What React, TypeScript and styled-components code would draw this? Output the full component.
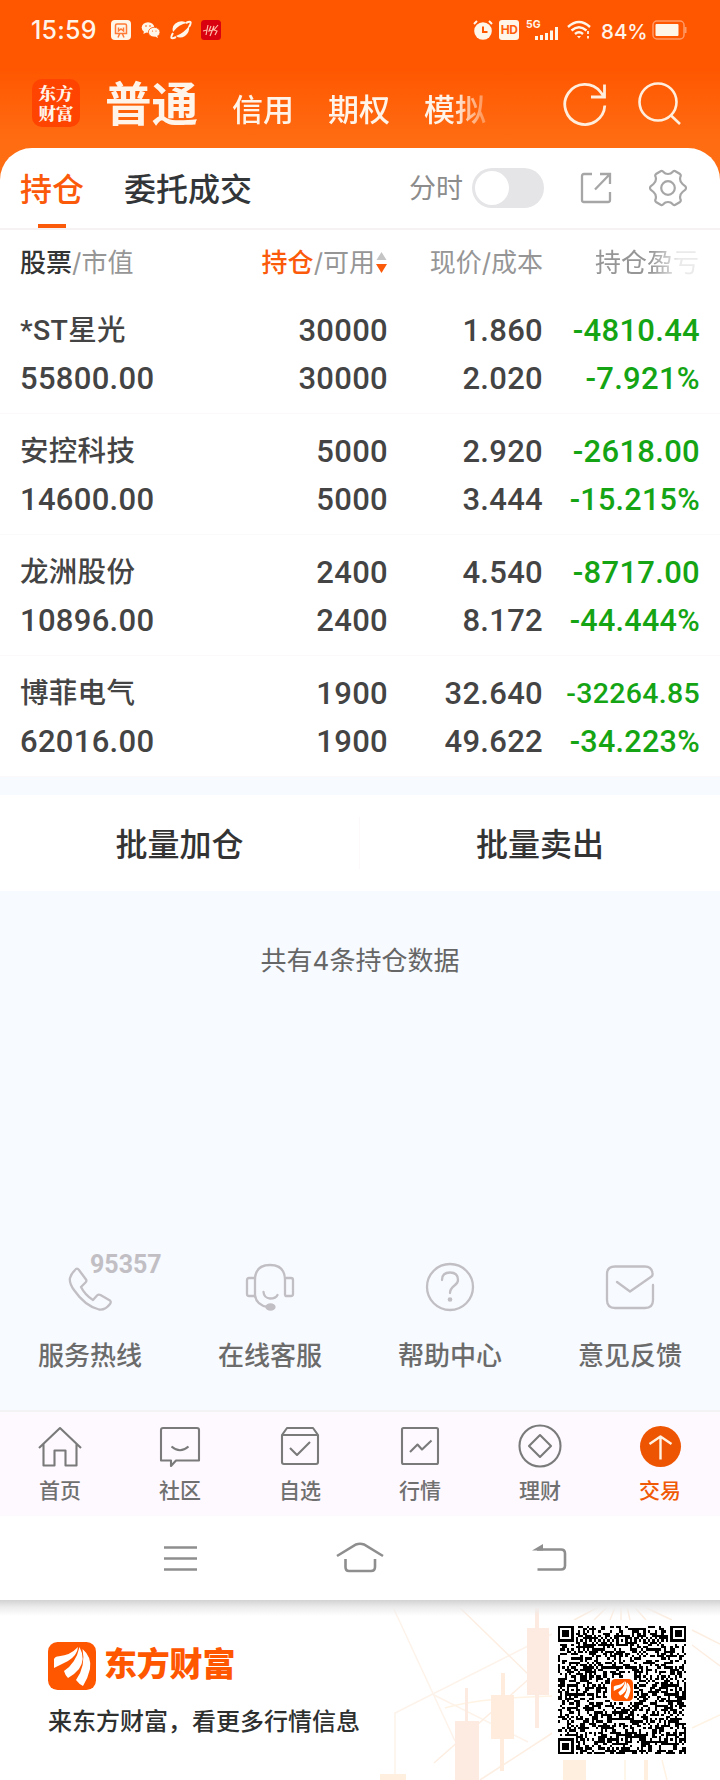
import React from "react";
import styled, { createGlobalStyle, css } from "styled-components";

const GlobalStyle = createGlobalStyle`
  * { box-sizing: border-box; }
  body {
    margin: 0;
    background: #fff;
    font-family: Inter, "Noto Sans CJK SC", sans-serif;
    color: #3a3a3a;
  }
`;

const Page = styled.div`
  width: 720px;
  height: 1780px;
  overflow: hidden;
  display: flex;
  flex-direction: column;
  background: #f7faff;
`;

const TopArea = styled.header`
  height: 184px;
  flex: none;
  background: linear-gradient(#ff5600 0, #ff5600 66px, #ff6c12 140px, #ff6f14 184px);
  color: #fff4ea;
`;

const StatusBar = styled.div`
  height: 60px;
  padding: 0 33px 0 31px;
  display: flex;
  align-items: center;
  justify-content: space-between;
`;

const StatusGroup = styled.div`
  display: flex;
  align-items: center;
`;

const Clock = styled.span`
  width: 80px;
  font-size: 25px;
  font-weight: 500;
  line-height: 30px;
  letter-spacing: 0.2px;
`;

const Battery = styled.span`
  width: 51px;
  padding-top: 4px;
  font-size: 20.5px;
  font-weight: 500;
  line-height: 26px;
`;

const MarketBar = styled.div`
  height: 88px;
  padding: 0 38px 0 32px;
  display: flex;
  align-items: flex-start;
`;

const BrandTile = styled.div`
  width: 48px;
  height: 48px;
  margin-top: 19px;
  padding-top: 4px;
  border-radius: 10px;
  background: #ff4300;
  font-family: "Noto Serif CJK SC", "Noto Sans CJK SC", sans-serif;
  font-size: 17.5px;
  font-weight: 900;
  line-height: 20px;
  display: flex;
  flex-direction: column;
  align-items: center;
`;

const Markets = styled.nav`
  width: 392px;
  margin-left: 25px;
  height: 88px;
  display: flex;
  align-items: baseline;
  white-space: nowrap;
  mask-image: linear-gradient(90deg, #000 348px, rgba(0, 0, 0, 0.25) 384px);
`;

const Market = styled.span<{ $main?: boolean }>`
  font-size: ${(p) => (p.$main ? "46.5px" : "31px")};
  font-weight: ${(p) => (p.$main ? 600 : 500)};
  line-height: 88px;
  margin-right: 34px;
`;

const MarketActions = styled.div`
  margin-left: auto;
  margin-top: 20px;
  display: flex;
  gap: 31px;
`;

const Sheet = styled.section`
  flex: none;
  height: 628px;
  margin-top: -36px;
  border-radius: 32px 32px 0 0;
  background: #fff;
`;

const TabsRow = styled.div`
  height: 82px;
  padding: 0 33px 0 20px;
  border-bottom: 2px solid #f6f2f4;
  display: flex;
  align-items: center;
`;

const Tab = styled.span<{ $active?: boolean }>`
  height: 80px;
  font-size: 32px;
  font-weight: 500;
  line-height: 84px;
  margin-right: 40px;
  color: ${(p) => (p.$active ? "#fa5a0a" : "#333638")};
  display: flex;
  flex-direction: column;
  align-items: center;
  &::after {
    content: "";
    flex: none;
    display: ${(p) => (p.$active ? "block" : "none")};
    width: 28px;
    height: 4px;
    margin-top: -8px;
    background: #fa5a0a;
  }
`;

const SwitchLabel = styled.span`
  margin-left: auto;
  padding-top: 2px;
  font-size: 27px;
  line-height: 40px;
  color: #8c8c8c;
`;

const Switch = styled.span`
  width: 72px;
  height: 40px;
  margin: 0 36px 0 9px;
  padding: 3px;
  border-radius: 20px;
  background: #e5e5e7;
  &::before {
    content: "";
    display: block;
    width: 34px;
    height: 34px;
    border-radius: 50%;
    background: #fff;
  }
`;

const columns = css`
  display: grid;
  grid-template-columns: 200px 168px 155px 157px;
  padding: 0 20px;
`;

const HeadRow = styled.div`
  ${columns}
  height: 63px;
  padding-top: 14px;
  align-items: start;
  font-size: 26px;
  line-height: 38px;
  color: #969696;
  white-space: nowrap;
`;

const HeadCell = styled.span<{ $right?: boolean }>`
  display: flex;
  align-items: center;
  justify-content: ${(p) => (p.$right ? "flex-end" : "flex-start")};
`;

const FadedHead = styled.span`
  margin-left: 52px;
  width: 105px;
  mask-image: linear-gradient(90deg, #000 56px, rgba(0, 0, 0, 0.2) 84px);
`;

const Strong = styled.b<{ $accent?: boolean }>`
  font-weight: 500;
  color: ${(p) => (p.$accent ? "#fa5a0a" : "#333")};
`;

const Holding = styled.div`
  ${columns}
  height: 121px;
  padding-top: 14px;
  border-bottom: 1px solid #fbf9fa;
  font-family: Roboto, "Noto Sans CJK SC", sans-serif;
  font-size: 31px;
  font-weight: 500;
  line-height: 48px;
  letter-spacing: 0.3px;
  color: #444;
`;

const Pair = styled.div<{ $right?: boolean; $loss?: boolean }>`
  display: flex;
  flex-direction: column;
  white-space: nowrap;
  align-items: ${(p) => (p.$right ? "flex-end" : "flex-start")};
  ${(p) => p.$loss && "color: #14a414;"}
`;

const Value = styled.span<{ $size?: number }>`
  ${(p) => p.$size && `font-size: ${p.$size}px;`}
`;

const Actions = styled.div`
  flex: none;
  height: 96px;
  margin-top: 19px;
  background: #fff;
  display: grid;
  grid-template-columns: 359px 1fr;
  align-items: center;
`;

const Action = styled.button`
  height: 52px;
  border: 0;
  padding: 4px 0 0;
  background: none;
  font: 500 32px/48px Inter, "Noto Sans CJK SC", sans-serif;
  color: #333;
  & + & { border-left: 1px solid #fdf9fb; }
`;

const Summary = styled.p`
  flex: none;
  margin: 51px 0 0;
  height: 38px;
  text-align: center;
  font-size: 26px;
  line-height: 38px;
  color: #666;
`;

const HelpRow = styled.div`
  flex: none;
  margin-top: 265px;
  height: 165px;
  display: grid;
  grid-template-columns: repeat(4, 1fr);
`;

const HelpItem = styled.div`
  display: flex;
  flex-direction: column;
  align-items: center;
  font-size: 26px;
  font-weight: 500;
  line-height: 38px;
  color: #6b6b6b;
`;

const HelpIcon = styled.div`
  position: relative;
  height: 92px;
  padding-top: 17px;
`;

const Hotline = styled.span`
  position: absolute;
  left: 25px;
  top: 5px;
  font-family: Roboto, sans-serif;
  font-size: 25px;
  font-weight: 700;
  line-height: 30px;
  color: #c2bfc4;
`;

const TabBar = styled.nav`
  flex: none;
  height: 106px;
  border-top: 2px solid #f3f3f6;
  background: #fdf9ff;
  display: grid;
  grid-template-columns: repeat(6, 1fr);
`;

const TabItem = styled.div<{ $active?: boolean }>`
  display: flex;
  flex-direction: column;
  align-items: center;
  padding-top: 11px;
  font-size: 21px;
  font-weight: 500;
  line-height: 30px;
  gap: 7px;
  color: ${(p) => (p.$active ? "#f05a06" : "#707070")};
`;

const SystemNav = styled.div`
  flex: none;
  height: 84px;
  padding: 0 0 1px 156px;
  background: #fff;
  display: flex;
  align-items: center;
`;

const Promo = styled.footer`
  position: relative;
  flex: none;
  height: 180px;
  padding: 0 34px 0 48px;
  background: #fff;
  display: flex;
  justify-content: space-between;
`;

const PromoArt = styled.svg`
  position: absolute;
  right: 0;
  top: 0;
`;

const PromoShade = styled.div`
  position: absolute;
  inset: 0 0 auto 0;
  height: 16px;
  background: linear-gradient(#d2d2d2, #ececec 45%, rgba(255, 255, 255, 0));
`;

const PromoText = styled.div`
  padding-top: 42px;
`;

const Brand = styled.div`
  display: flex;
  align-items: center;
  gap: 8px;
  height: 48px;
  font-size: 33px;
  font-weight: 900;
  line-height: 44px;
  letter-spacing: -0.2px;
  color: #ff5600;
`;

const BrandName = styled.span`
  padding-bottom: 4px;
`;

const Slogan = styled.div`
  margin-top: 14px;
  font-size: 24px;
  font-weight: 500;
  line-height: 36px;
  color: #2e3030;
`;

const CodeBox = styled.div`
  position: relative;
  width: 140px;
  height: 140px;
  margin: 20px -6px 0 0;
  padding: 6px;
  background: #fff;
`;

const TrainIcon = () => (
  <svg width="20" height="20" viewBox="0 0 20 20">
    <rect width="20" height="20" rx="4" fill="#fff6ea" />
    <path d="M4.500 13.500V5.500Q4.500 4 6 4H14Q15.500 4 15.500 5.500V13.500zM7 17.500L8.500 14M13 17.500L11.500 14M7.500 7.500V11L10 9L12.500 11V7.500" fill="none" stroke="#ff7a35" strokeWidth="1.500" />
  </svg>
);

const ChatIcon = () => (
  <svg width="20" height="18" viewBox="0 0 20 18" fill="#fff6ea">
    <ellipse cx="7" cy="6.500" rx="6.300" ry="5.300" />
    <path d="M3 10l-.6 3 3-1.500z" />
    <ellipse cx="13.200" cy="11.200" rx="5.800" ry="4.900" stroke="#ff5600" strokeWidth=".8" />
    <path d="M16 14.500l1 2.500-3-1.500z" />
    <g fill="#ff5600"><circle cx="5" cy="5" r=".8" /><circle cx="9" cy="5" r=".8" /><circle cx="11.500" cy="10" r=".6" /><circle cx="15" cy="10" r=".6" /></g>
  </svg>
);

const PlanetIcon = () => (
  <svg width="22" height="20" viewBox="0 0 22 20" fill="none">
    <path d="M3 12Q1 5 8 2Q13 0 17 3Q9 4 3 12zM6 16Q14 13 19 6Q20 12 15 16Q10 19 6 16z" fill="#fff6ea" />
    <path d="M3 13C0 18 1 19.500 6 17M16 3c5-2.500 6-1 3 4" stroke="#fff6ea" strokeWidth="2" />
    <path d="M5 14Q8 7 16 4.500Q13 11 5 14z" fill="#ff5600" />
  </svg>
);

const RedIcon = () => (
  <svg width="20" height="20" viewBox="0 0 20 20">
    <rect width="20" height="20" rx="3.500" fill="#d9000f" />
    <path d="M2 11l4-1M7 5L5 15M10 6l-2 5 4-1 1-4-4 10M17 5l-4 5 3 1-2 4" fill="none" stroke="#ffb9a8" strokeWidth="1.200" />
  </svg>
);

const AlarmIcon = () => (
  <svg width="20" height="20" viewBox="0 0 20 20">
    <circle cx="10" cy="11" r="8.800" fill="#fff6ea" />
    <path d="M1 4l3-3M19 4l-3-3" stroke="#fff6ea" strokeWidth="2" />
    <path d="M10 6.500V12h4.500" fill="none" stroke="#ff5600" strokeWidth="2" />
  </svg>
);

const HdTile = styled.span`
  width: 20px;
  height: 20px;
  margin-left: 6px;
  border-radius: 3px;
  background: #fff6ea;
  color: #ff5f0c;
  font-size: 12px;
  font-weight: 700;
  line-height: 20px;
  text-align: center;
  letter-spacing: -0.5px;
`;

const Signal = styled.span`
  position: relative;
  width: 34px;
  height: 22px;
  margin-left: 7px;
  font-size: 10.5px;
  font-weight: 700;
  line-height: 11px;
  color: #fff6ea;
  svg { position: absolute; left: 8px; bottom: 1px; }
`;

const WifiIcon = () => (
  <svg width="24" height="20" viewBox="0 0 24 20" fill="none" stroke="#fff6ea" strokeWidth="2.400">
    <path d="M1 7Q12-3 23 7M4.500 10.500Q12 4 19.500 10.500M8 14Q12 10.500 16 14" />
    <path d="M10 16l2 2.500 2-2.500z" fill="#fff6ea" stroke="none" />
    <path d="M21 11v3M21 16v2.500" strokeWidth="1.800" />
  </svg>
);

const BatteryIcon = () => (
  <svg width="35" height="20" viewBox="0 0 35 20" fill="none">
    <rect x="1" y="1" width="31" height="18" rx="4" stroke="#ff9a66" strokeWidth="1.500" />
    <rect x="3.500" y="4" width="23" height="12" rx="1" fill="#fff6ea" />
    <path d="M33.500 7v6" stroke="#ff9a66" strokeWidth="2" />
  </svg>
);

const RefreshIcon = () => (
  <svg width="44" height="46" viewBox="0 0 44 46" fill="none" stroke="#ffeedd" strokeWidth="2.800">
    <path d="M41.800 25.500A20 20 0 1 1 37.500 12L41 16.500M41.500 4.500V17H28" />
  </svg>
);

const SearchIcon = () => (
  <svg width="44" height="46" viewBox="0 0 44 46" fill="none" stroke="#ffeedd" strokeWidth="2.600">
    <circle cx="20" cy="22" r="18.500" />
    <path d="M33 35.500l9 8.500" />
  </svg>
);

const ShareIcon = () => (
  <svg width="32" height="32" viewBox="0 0 32 32" fill="none" stroke="#a6a6a6" strokeWidth="2.300">
    <path d="M12 2H4Q2 2 2 4V28Q2 30 4 30H28Q30 30 30 28V20M20 2H30V12M30 2L15 17.500" />
  </svg>
);

const GearIcon = () => (
  <svg width="38" height="38" viewBox="0 0 38 38" fill="none" stroke="#a6a6a6" strokeWidth="2.200">
    <path d="M12 2Q13.500 1.500 14.500 3Q16 5 19 5T23.500 3Q24.500 1.500 26 2L31 5Q32.200 6 31.500 7.500Q30 12 33.500 15L36.500 17.500Q37.500 19 36.500 20.500L33.500 23Q30 26 31.500 30.500Q32.200 32 31 33L26 36Q24.500 36.500 23.500 35Q22 33 19 33T14.500 35Q13.500 36.500 12 36L7 33Q5.800 32 6.500 30.500Q8 26 4.500 23L1.500 20.500Q.5 19 1.500 17.500L4.500 15Q8 12 6.500 7.500Q5.800 6 7 5z" />
    <circle cx="19" cy="19" r="6.800" />
  </svg>
);

const GearSlot = styled.span`
  display: flex;
  margin-left: 37px;
`;

const ShareSlot = styled.span`
  display: flex;
`;

const SortIcon = () => (
  <svg width="13" height="24" viewBox="0 0 13 24">
    <path d="M6.500 1L11.500 9h-10z" fill="#c4c4c4" />
    <path d="M1 13h11l-5.500 9z" fill="#fa5a0a" />
  </svg>
);

const helpStroke = { fill: "none", stroke: "#c2bfc4", strokeWidth: 2.3, strokeLinecap: "round" as const, strokeLinejoin: "round" as const };

const PhoneIcon = () => (
  <svg width="50" height="50" viewBox="0 0 50 50" {...helpStroke}>
    <path d="M11 7Q12.500 6 14 8L21 17.500Q22 19 20.500 20.500L16 25Q20 33 28 38L32 33.500Q33.500 32 35.500 33L45 38.500Q46.500 40 45 42Q40 48.500 34 47.500Q20 44 9 28Q4 21 5 16Q6.500 11 11 7z" />
  </svg>
);

const HeadsetIcon = () => (
  <svg width="50" height="50" viewBox="0 0 50 50" {...helpStroke}>
    <path d="M10 35V18Q10 3 25 3T40 18V33M9.500 16H4Q2 16 2 18V32Q2 34 4 34H9.500M40.500 16H46Q48 16 48 18V32Q48 34 46 34H40.500M10 33Q11 43 23 45M18.500 30Q19 36 25 36.500Q31 36.500 32.500 33" />
    <ellipse cx="25.500" cy="45" rx="4" ry="2.700" fill="#c2bfc4" />
  </svg>
);

const QuestionIcon = () => (
  <svg width="50" height="50" viewBox="0 0 50 50" {...helpStroke}>
    <circle cx="25" cy="25" r="23" />
    <path d="M17 18Q17 10.500 25 10.500T33 18Q33 21 29.500 23.500Q25 27 25 31" />
    <circle cx="25" cy="37.500" r="1.200" fill="#c2bfc4" />
  </svg>
);

const MailIcon = () => (
  <svg width="50" height="50" viewBox="0 0 50 50" {...helpStroke}>
    <path d="M12 20L25 29.500L46.500 14.500Q48 13.500 47.500 11Q46.500 4.500 40 4.500H10Q2 4.500 2 12V38Q2 46 10 46H40Q48 46 48 38V23" />
  </svg>
);

const tabStroke = { width: 46, height: 46, viewBox: "0 0 46 46", fill: "none", stroke: "#7a7a7a", strokeWidth: 2.1, strokeLinejoin: "round" as const };

const HomeIcon = () => (
  <svg {...tabStroke}>
    <path d="M2 25L23 5L44 25M6.500 21V42.500H17.500V27.500H28.500V42.500H39.500V21" />
  </svg>
);
const CommunityIcon = () => (
  <svg {...tabStroke}>
    <path d="M6 5H40Q42 5 42 7V37.500H19L14 43V37.500H4V7Q4 5 6 5zM14.500 23.500Q23 31 31.500 23.500" />
  </svg>
);
const FavoriteIcon = () => (
  <svg {...tabStroke}>
    <path d="M5 12V39Q5 41 7 41H39Q41 41 41 39V12L36 5H10zM5 12H41M13 25L20 32L33 19" />
  </svg>
);
const QuotesIcon = () => (
  <svg {...tabStroke}>
    <rect x="5" y="5" width="36" height="36" rx="1.500" />
    <path d="M13 29L20.500 21.500L25 26.500L34.500 17.500" />
  </svg>
);
const WealthIcon = () => (
  <svg {...tabStroke}>
    <circle cx="23" cy="23" r="20.500" />
    <path d="M23 12L34 23L23 34L12 23z" />
  </svg>
);
const TradeIcon = () => (
  <svg {...tabStroke} stroke="#fff2e2" strokeWidth={2.4}>
    <circle cx="23.500" cy="23.500" r="20.500" fill="#ee5503" stroke="none" />
    <path d="M23.500 36.500V13.500M12.500 21L23.500 13.500L34.500 21" />
  </svg>
);

const MenuKey = () => (
  <svg width="50" height="40" viewBox="0 0 50 40" stroke="#8e8e8e" strokeWidth="2.600">
    <path d="M8 9.500H41M8 20.500H41M8 31.500H41" />
  </svg>
);
const HomeKey = () => (
  <svg width="50" height="40" viewBox="0 0 50 40" fill="none" stroke="#8e8e8e" strokeWidth="2.600">
    <path d="M2 18L21 6.500Q25 5 29 6.500L48 18M10.500 21V29Q10.500 33 14 33H36Q40 33 40 29V21" />
  </svg>
);
const BackKey = () => (
  <svg width="50" height="40" viewBox="0 0 50 40" fill="none" stroke="#8e8e8e" strokeWidth="2.600">
    <path d="M10 11.500H34Q38 11.500 38 15.500V27.500Q38 31.500 34 31.500H10.500" />
    <path d="M5 12.500L16 6V12.500z" fill="#8e8e8e" stroke="none" />
  </svg>
);
const KeySlot = styled.span<{ $gap?: number }>`
  display: flex;
  margin-right: ${(p) => p.$gap ?? 0}px;
`;

const Mark = ({ size }: { size: number }) => (
  <svg width={size} height={size} viewBox="0 0 48 48">
    <rect width="48" height="48" rx="9.500" fill="#ff5600" />
    <g fill="#fff">
      <path d="M6 25V17Q7 14.500 11 14.200Q22 13.500 30 5Q29.500 13 20 19Q13 22.500 6 26z" />
      <path d="M16 29Q28 21 31.500 5Q38 17 31 27Q27 32 20 36Q17 33 16 29z" />
      <path d="M28 38Q38 24 34.500 7Q44 15 42 27Q40 36 35 44Q31 42 28 38z" />
    </g>
  </svg>
);

const MODULES = 57;

// Finder rings, alignment rings and timing lines of a 57-module code; the rest is filled by a seeded noise.
function buildModules(): string {
  let seed = 95357;
  const noise = () => {
    seed = (Math.imul(seed, 1103515245) + 12345) & 0x7fffffff;
    return (seed >> 16) & 1;
  };
  const finders = [[3, 3], [53, 3], [3, 53]];
  const aligns = [[28, 6], [6, 28], [28, 28], [50, 28], [28, 50], [50, 50]];
  let d = "";
  for (let y = 0; y < MODULES; y++) {
    for (let x = 0; x < MODULES; x++) {
      let on = noise() === 1;
      if (y === 6) on = x % 2 === 0;
      if (x === 6) on = y % 2 === 0;
      for (const [cx, cy] of aligns) {
        const r = Math.max(Math.abs(x - cx), Math.abs(y - cy));
        if (r <= 2) on = r !== 1;
      }
      for (const [cx, cy] of finders) {
        const r = Math.max(Math.abs(x - cx), Math.abs(y - cy));
        if (r <= 4) on = r !== 2 && r !== 4;
      }
      if (Math.abs(x - 28) <= 5 && Math.abs(y - 28) <= 5) on = false;
      if (on) d += `M${x} ${y}h1v1h-1z`;
    }
  }
  return d;
}

const codePath = buildModules();

const CodeMark = styled.span`
  position: absolute;
  left: 59px;
  top: 59px;
  display: flex;
`;

const holdings = [
  { name: "*ST星光", value: "55800.00", held: "30000", free: "30000", price: "1.860", cost: "2.020", pl: "-4810.44", rate: "-7.921%" },
  { name: "安控科技", value: "14600.00", held: "5000", free: "5000", price: "2.920", cost: "3.444", pl: "-2618.00", rate: "-15.215%" },
  { name: "龙洲股份", value: "10896.00", held: "2400", free: "2400", price: "4.540", cost: "8.172", pl: "-8717.00", rate: "-44.444%" },
  { name: "博菲电气", value: "62016.00", held: "1900", free: "1900", price: "32.640", cost: "49.622", pl: "-32264.85", rate: "-34.223%" },
];

// Long loss figures shrink to keep inside their column.
const lossSize = (text: string) =>
  text.length > 8 ? 28.5 : text.endsWith("%") && text.length > 7 ? 30.5 : undefined;

const tabs = [
  { label: "首页", Icon: HomeIcon },
  { label: "社区", Icon: CommunityIcon },
  { label: "自选", Icon: FavoriteIcon },
  { label: "行情", Icon: QuotesIcon },
  { label: "理财", Icon: WealthIcon },
  { label: "交易", Icon: TradeIcon, active: true },
];

const Spaced = styled.span<{ $left: number }>`
  display: flex;
  margin-left: ${(p) => p.$left}px;
`;

export default function App() {
  return (
    <Page>
      <GlobalStyle />
      <TopArea>
        <StatusBar>
          <StatusGroup>
            <Clock>15:59</Clock>
            <TrainIcon />
            <Spaced $left={10}><ChatIcon /></Spaced>
            <Spaced $left={9}><PlanetIcon /></Spaced>
            <Spaced $left={9}><RedIcon /></Spaced>
          </StatusGroup>
          <StatusGroup>
            <AlarmIcon />
            <HdTile>HD</HdTile>
            <Signal>
              5G
              <svg width="25" height="13" viewBox="0 0 25 13" fill="#fff6ea">
                <path d="M1 9h3v4H1zM6 8h3v5H6zM11 6h3v7h-3zM16 3.500h3V13h-3zM21 0h3v13h-3z" />
              </svg>
            </Signal>
            <Spaced $left={7}><WifiIcon /></Spaced>
            <Spaced $left={10}><Battery>84%</Battery></Spaced>
            <BatteryIcon />
          </StatusGroup>
        </StatusBar>
        <MarketBar>
          <BrandTile><span>东方</span><span>财富</span></BrandTile>
          <Markets>
            <Market $main>普通</Market>
            <Market>信用</Market>
            <Market>期权</Market>
            <Market>模拟</Market>
          </Markets>
          <MarketActions>
            <RefreshIcon />
            <SearchIcon />
          </MarketActions>
        </MarketBar>
      </TopArea>

      <Sheet>
        <TabsRow>
          <Tab $active>持仓</Tab>
          <Tab>委托成交</Tab>
          <SwitchLabel>分时</SwitchLabel>
          <Switch />
          <ShareSlot><ShareIcon /></ShareSlot>
          <GearSlot><GearIcon /></GearSlot>
        </TabsRow>
        <HeadRow>
          <HeadCell><Strong>股票</Strong>/市值</HeadCell>
          <HeadCell $right><Strong $accent>持仓</Strong>/可用<SortIcon /></HeadCell>
          <HeadCell $right>现价/成本</HeadCell>
          <FadedHead>持仓盈亏</FadedHead>
        </HeadRow>
        {holdings.map((h) => (
          <Holding key={h.name}>
            <Pair><Value $size={28.5}>{h.name}</Value><Value>{h.value}</Value></Pair>
            <Pair $right><Value>{h.held}</Value><Value>{h.free}</Value></Pair>
            <Pair $right><Value>{h.price}</Value><Value>{h.cost}</Value></Pair>
            <Pair $right $loss><Value $size={lossSize(h.pl)}>{h.pl}</Value><Value $size={lossSize(h.rate)}>{h.rate}</Value></Pair>
          </Holding>
        ))}
      </Sheet>

      <Actions>
        <Action>批量加仓</Action>
        <Action>批量卖出</Action>
      </Actions>
      <Summary>共有4条持仓数据</Summary>

      <HelpRow>
        <HelpItem><HelpIcon><PhoneIcon /><Hotline>95357</Hotline></HelpIcon>服务热线</HelpItem>
        <HelpItem><HelpIcon><HeadsetIcon /></HelpIcon>在线客服</HelpItem>
        <HelpItem><HelpIcon><QuestionIcon /></HelpIcon>帮助中心</HelpItem>
        <HelpItem><HelpIcon><MailIcon /></HelpIcon>意见反馈</HelpItem>
      </HelpRow>

      <TabBar>
        {tabs.map(({ label, Icon, active }) => (
          <TabItem key={label} $active={active}><Icon />{label}</TabItem>
        ))}
      </TabBar>

      <SystemNav>
        <KeySlot $gap={129}><MenuKey /></KeySlot>
        <KeySlot $gap={142}><HomeKey /></KeySlot>
        <KeySlot><BackKey /></KeySlot>
      </SystemNav>

      <Promo>
        <PromoArt width="340" height="180" viewBox="0 0 340 180" fill="none">
          <g stroke="#fdeee2" strokeWidth="1.500">
            <path d="M15 180V113L172 34M54 95L148 142" stroke="#fdf3ea" />
            <path d="M12 5L75 141" stroke="#fdf3ea" />
            <path d="M72 0L150 76M54 163L150 78M100 180L180 128" />
            <path d="M228 2L194 20M232 2L214 20M237 2L230 20M241 2V20M246 2L250 20M250 2L266 20M254 2L292 20M312 30L340 44M312 45L340 66" />
            <path d="M65 108Q100 98 172 96M312 128L340 115M245 160V180M282 160L287 180" stroke="#fff3e4" />
          </g>
          <g fill="#fdeae0">
            <path d="M155 8h4v20h10v67h-10v33h-4V95h-8V28h8z" />
            <path d="M121 73h4v22h9v44h-10v32h-4v-32h-9V95h10z" fill="#ffecdd" />
            <path d="M85 88h3v33h11v59H75v-59h10z" />
            <path d="M183 160h23v20h-23zM264 160h4v20h-4zM0 174h26v6H0z" fill="#ffefdf" />
          </g>
        </PromoArt>
        <PromoShade />
        <PromoText>
          <Brand><Mark size={48} /><BrandName>东方财富</BrandName></Brand>
          <Slogan>来东方财富，看更多行情信息</Slogan>
        </PromoText>
        <CodeBox>
          <svg width="128" height="128" viewBox="0 0 57 57" shapeRendering="crispEdges"><path d={codePath} /></svg>
          <CodeMark><Mark size={22} /></CodeMark>
        </CodeBox>
      </Promo>
    </Page>
  );
}
